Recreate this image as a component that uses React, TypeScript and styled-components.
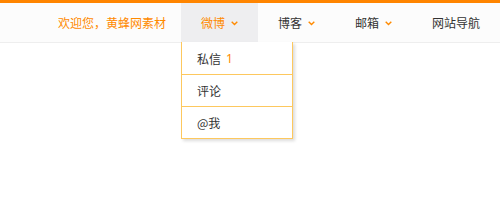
import React from "react";
import styled, { createGlobalStyle } from "styled-components";

const Global = createGlobalStyle`
  html, body { margin: 0; padding: 0; background: #fff; height: 100%; }
  #root { min-height: 100%; }
  body { font-family: "Microsoft YaHei", "Noto Sans CJK SC", "Noto Sans", sans-serif; font-size: 12px; color: #333; }
`;

const Page = styled.div`
  min-height: 221px;
`;

const TopBar = styled.div`
  border-top: 3px solid #ff8500;
  background: #fcfcfc;
  border-bottom: 1px solid #eeeeee;
  height: 39px;
`;

const Nav = styled.nav`
  display: flex;
  justify-content: flex-end;
  align-items: stretch;
  height: 100%;
`;

const Welcome = styled.span`
  display: flex;
  align-items: center;
  color: #ff8a00;
  padding-right: 15px;
  white-space: nowrap;
`;

const Item = styled.div<{ $active?: boolean }>`
  position: relative;
  display: flex;
  align-items: center;
  gap: 6px;
  padding: 0 20px;
  white-space: nowrap;
  color: ${(p) => (p.$active ? "#ff8a00" : "#333")};
  background: ${(p) => (p.$active ? "#eeeef0" : "transparent")};
`;

const Menu = styled.ul`
  position: absolute;
  top: 100%;
  left: 0;
  margin: 0;
  padding: 1px 0 0;
  list-style: none;
  width: 110px;
  background: #fff;
  border: 1px solid #fdc85e;
  border-top: none;
  border-bottom: none;
  box-shadow: 2px 2px 3px rgba(0, 0, 0, 0.14);
  z-index: 2;
`;

const MenuRow = styled.li`
  height: 31px;
  display: flex;
  align-items: center;
  gap: 5px;
  padding-left: 15px;
  color: #333;
  border-bottom: 1px solid #fdc85e;
`;

const Count = styled.span`
  color: #ff8a00;
  font-family: "Noto Sans", sans-serif;
`;

const Arrow = () => (
  <svg width="7" height="5" viewBox="0 0 7 5" style={{ marginTop: 1 }}>
    <path d="M0.7 0.8 L3.5 3.6 L6.3 0.8" fill="none" stroke="#ff8a00" strokeWidth="1.4" />
  </svg>
);

export default function App() {
  return (
    <Page>
      <Global />
      <TopBar>
        <Nav>
          <Welcome>欢迎您，黄蜂网素材</Welcome>
          <Item $active>
            微博
            <Arrow />
            <Menu>
              <MenuRow>
                私信<Count>1</Count>
              </MenuRow>
              <MenuRow>评论</MenuRow>
              <MenuRow>@我</MenuRow>
            </Menu>
          </Item>
          <Item>
            博客
            <Arrow />
          </Item>
          <Item>
            邮箱
            <Arrow />
          </Item>
          <Item>网站导航</Item>
        </Nav>
      </TopBar>
    </Page>
  );
}
